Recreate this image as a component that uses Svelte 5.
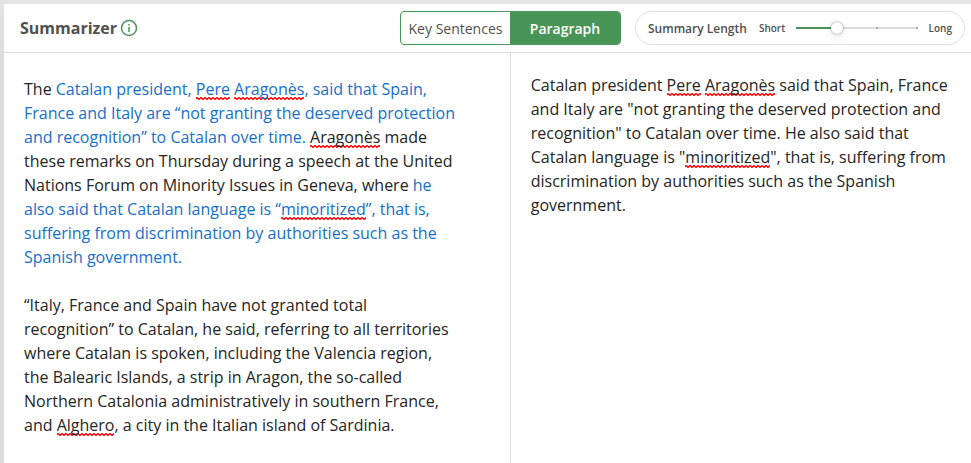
<script>
  let mode = $state('paragraph');
  let length = $state(1);
  const steps = 3;
</script>

<main class="frame">
  <div class="card">
    <header>
      <div class="title">
        <h1>Summarizer</h1>
        <button class="info" aria-label="About the summarizer">
          <svg width="18" height="18" viewBox="0 0 18 18" fill="none" stroke="#499557" stroke-width="1.5">
            <circle cx="9" cy="9" r="7.5" />
            <path d="M9 8v5M9 5v1.5" />
          </svg>
        </button>
      </div>

      <div class="modes">
        <button class:active={mode === 'key'} onclick={() => (mode = 'key')}>Key Sentences</button>
        <button class:active={mode === 'paragraph'} onclick={() => (mode = 'paragraph')}>Paragraph</button>
      </div>

      <div class="length">
        <label for="summary-length">Summary Length</label>
        <span class="end">Short</span>
        <input
          id="summary-length"
          type="range"
          min="0"
          max={steps}
          step="1"
          bind:value={length}
          style:--fill={length / steps}
        />
        <span class="end">Long</span>
      </div>
    </header>

    <div class="panes">
      <section class="source">
        <p>
          The <mark>Catalan president, <span class="typo">Pere</span> <span class="typo">Aragonès</span>, said that Spain, France and Italy are “not granting the deserved protection and recognition” to Catalan over time.</mark> <span class="typo">Aragonès</span> made these remarks on Thursday during a speech at the United Nations Forum on Minority Issues in Geneva, where <mark>he also said that Catalan language is “<span class="typo">minoritized</span>”, that is, suffering from discrimination by authorities such as the Spanish government.</mark>
        </p>
        <p>
          “Italy, France and Spain have not granted total recognition” to Catalan, he said, referring to all territories where Catalan is spoken, including the Valencia region, the Balearic Islands, a strip in Aragon, the so-called Northern Catalonia administratively in southern France, and <span class="typo">Alghero</span>, a city in the Italian island of Sardinia.
        </p>
      </section>
      <section class="summary">
        <p>
          Catalan president <span class="typo">Pere</span> <span class="typo">Aragonès</span> said that Spain, France and Italy are "not granting the deserved protection and recognition" to Catalan over time. He also said that Catalan language is "<span class="typo">minoritized</span>", that is, suffering from discrimination by authorities such as the Spanish government.
        </p>
      </section>
    </div>
  </div>
</main>

<style>
  :global(body) {
    margin: 0;
    background: #dedede;
  }
  .frame {
    box-sizing: border-box;
    min-height: 100vh;
    padding: 4px 0 0 4px;
    display: flex;
    background: linear-gradient(#e4e4e4, #dcdcdc 60px);
    font-family: 'Open Sans', 'Noto Sans', sans-serif;
    color: #252525;
  }
  .card {
    flex: 1;
    display: flex;
    flex-direction: column;
    background: #fff;
  }
  header {
    display: flex;
    align-items: center;
    height: 48px;
    padding: 0 6px 0 16px;
    border-bottom: 1px solid #d9dce0;
    color: #505050;
  }
  .title {
    flex: 1;
    display: flex;
    align-items: center;
    gap: 3px;
  }
  h1 {
    margin: 0;
    font-size: 16px;
    line-height: 24px;
    font-weight: 700;
  }
  button {
    font: inherit;
    color: inherit;
    background: none;
    border: 0;
    padding: 0;
    cursor: pointer;
  }
  .info {
    display: flex;
  }
  .modes {
    box-sizing: border-box;
    display: grid;
    grid-template-columns: 109px 110px;
    height: 34px;
    border: 1px solid #499557;
    border-radius: 4px;
    overflow: hidden;
    font-size: 14px;
  }
  .modes button {
    white-space: nowrap;
  }
  .modes .active {
    background: #499557;
    color: #fff;
    font-weight: 600;
  }
  .length {
    box-sizing: border-box;
    display: flex;
    align-items: center;
    width: 330px;
    height: 34px;
    margin-left: 14px;
    padding: 0 12px;
    border: 1px solid #dedfe0;
    border-radius: 17px;
    white-space: nowrap;
  }
  .length label {
    margin-right: 12px;
    font-size: 12px;
    font-weight: 600;
  }
  .end {
    font-size: 10px;
    font-weight: 600;
  }
  input {
    --track: calc(100% - 12px);
    appearance: none;
    flex: 1;
    min-width: 0;
    height: 12px;
    margin: 0 5px;
    background:
      linear-gradient(#499557, #499557) 6px 5px / calc(var(--track) * var(--fill)) 2px no-repeat,
      linear-gradient(#aaa, #aaa) calc(6px + var(--track) * 0.667) 5px / 2px 2px no-repeat,
      linear-gradient(#aaa, #aaa) right 6px top 5px / 2px 2px no-repeat,
      linear-gradient(#dcdcdc, #dcdcdc) 6px 5px / var(--track) 2px no-repeat;
  }
  input::-webkit-slider-thumb {
    appearance: none;
    width: 12px;
    height: 12px;
    border-radius: 50%;
    background: #fff;
    box-shadow: 0 0 2px rgba(0, 0, 0, 0.5), 0 2px 10px rgba(0, 0, 0, 0.12);
  }
  .panes {
    flex: 1;
    display: flex;
    font-size: 16px;
    line-height: 24px;
  }
  .source {
    box-sizing: border-box;
    width: 52.4%;
    padding: 24px 54px 25px 20px;
    border-right: 1px solid #dcdcdc;
  }
  .summary {
    flex: 1;
    min-width: 0;
    padding: 20px;
  }
  p {
    margin: 0 0 24px;
  }
  p:last-child {
    margin-bottom: 0;
  }
  mark {
    background: none;
    color: #1570cd;
  }
  .typo {
    background: url("data:image/svg+xml,%3Csvg xmlns='http://www.w3.org/2000/svg' width='4' height='3'%3E%3Cpath d='M-1 2.5L1 .5 3 2.5 5 .5' fill='none' stroke='%23f00' stroke-width='1.3'/%3E%3C/svg%3E")
      left bottom / 4px 3px repeat-x;
  }
</style>
